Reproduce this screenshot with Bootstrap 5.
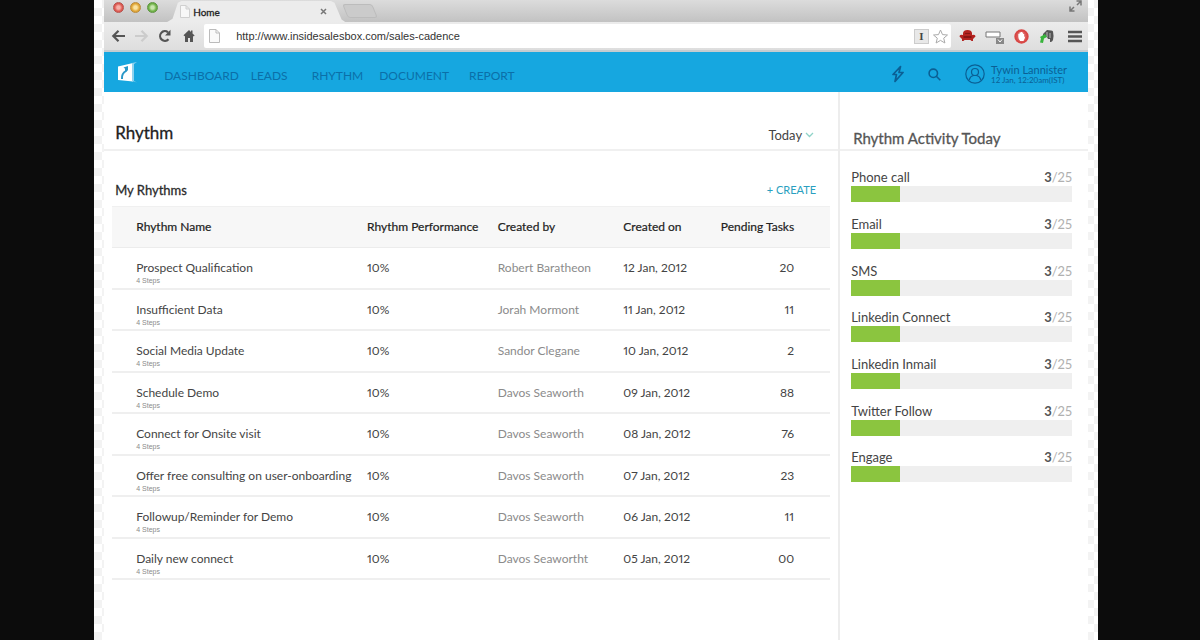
<!DOCTYPE html>
<html lang="en">
<head>
<meta charset="utf-8">
<meta name="viewport" content="width=device-width, initial-scale=1">
<title>Home</title>
<link rel="stylesheet" href="https://cdn.jsdelivr.net/npm/bootstrap@5.3.0/dist/css/bootstrap.min.css">
<style>
  :root { --ink: #444; --soft: #8b8b8b; --brand: #16a7e0; --brand-ink: #0b6fa8; --done: #8bc53f; }
  body { background: #0c0c0c; color: var(--ink); font: 12px/16px Lato, "Open Sans", sans-serif; font-variant-numeric: proportional-nums; }
  button { color: inherit; }
  svg { display: block; flex: none; }
  .stage { margin: 0 8.5% 0 7.85%; padding: 0 10px; min-height: 100vh;
    background: repeating-conic-gradient(#f3f3f3 0 25%, #fff 0 50%) 0 0 / 16px 16px; }
  .tabstrip { height: 22px; background: linear-gradient(#dcdcdc, #c2c2c2); padding: 0 6px 0 9px; }
  .lights { gap: 6px; width: 54px; padding-top: 2px; }
  .light { width: 11px; height: 11px; border-radius: 50%; border: 1px solid; }
  .light-close { background: radial-gradient(#f6b0a8 25%, #dd5850 60%); border-color: #b5524d; }
  .light-min { background: radial-gradient(#fbe3a0 25%, #e0a535 60%); border-color: #b98a3c; }
  .light-max { background: radial-gradient(#c8e6ad 25%, #6db045 60%); border-color: #5e9442; }
  .page-tab { width: 178px; height: 21px; padding: 0 18px 0 13px; gap: 3px; color: #222; font-size: 10px; -webkit-text-stroke: .3px;
    background: #ececec; clip-path: polygon(0 100%, 3% 85%, 6% 8%, 8% 0, 92% 0, 94% 8%, 98% 88%, 100% 100%); }
  .ghost-tab { width: 30px; height: 14px; background: #cbcbcb; border: 1px solid #bcbcbc; border-radius: 3px; transform: skewX(22deg); margin-bottom: 4px; }
  .toolbar { height: 30px; background: linear-gradient(#ececec, #dedede); border-bottom: 2px solid #c5ccd0; padding: 0 6px 0 7px; }
  .tool { padding: 0; border: 0; background: none; }
  .omnibox { height: 24px; background: #fff; border-radius: 2px; padding: 0 3px 0 5px; margin: 0 8px; min-width: 0; }
  .omnibox input { border: 0; outline: 0; padding: 0; min-width: 0; background: none; color: #333; font: 11px/16px "Liberation Sans", Arial, sans-serif; }
  .reader { width: 15px; height: 15px; background: #e8e8e8; border: 1px solid #ccc; font: bold 11px/13px "Liberation Serif", serif; }
  .extensions { gap: 9px; }
  .appbar { height: 40px; background: var(--brand); color: var(--brand-ink); padding: 0 21px 0 13px; }
  .appbar a { color: inherit; text-decoration: none; line-height: 16px; padding-top: 7px; }
  .appmenu { margin-left: 25px; column-gap: 12px; font-size: 12px; }
  .next-group { margin-left: 12px; }
  .account { font-size: 11px; line-height: 12px; gap: 6px; color: #0b5f94; }
  .account small { font-size: 8px; line-height: 9px; }
  .sheet { background: #fff; min-height: calc(100vh - 92px); }
  .side { flex: 0 0 25.4%; border-left: 2px solid #ededed; }
  .pagehead { height: 59px; border-bottom: 2px solid #f0f0f0; }
  .main-head { padding: 0 24px 6px 11px; }
  .side-head { padding: 0 0 1px 13px; }
  .main-title { font-size: 17px; line-height: 20px; font-weight: 400; color: #222; -webkit-text-stroke: .3px; }
  .side-title { font-size: 15px; line-height: 20px; font-weight: 400; color: #555; -webkit-text-stroke: .3px; }
  .period { font-size: 13px; gap: 3px; }
  .listhead { padding: 31px 22px 8px 11px; }
  .listhead h2 { font-size: 13px; line-height: 16px; color: #2b2b2b; -webkit-text-stroke: .3px; }
  .create { color: #2a9fc0; font-size: 11px; text-decoration: none; }
  .rhythms { margin: 0 8px; width: calc(100% - 16px); table-layout: fixed; border-collapse: separate; border-spacing: 0; }
  .rhythms th { height: 42px; background: #f7f7f7; border-top: 1px solid #f0f0f0; border-bottom: 1px solid #ececec; font-weight: 400; color: #222; -webkit-text-stroke: .2px; white-space: nowrap; padding: 0; }
  .rhythms td { height: 42px; vertical-align: top; padding: 12px 0 0; border-bottom: 2px solid #efefef; line-height: 16px; }
  .rhythms tr:nth-child(even) td { height: 41px; }
  .rhythms tr > :first-child { padding-left: 24px; }
  .rhythms tr > :last-child { text-align: right; padding-right: 36px; }
  .rhythms .steps { display: block; color: var(--soft); font: 7px/10px "Liberation Sans", Arial, sans-serif; }
  .c-name { width: 35.5%; } .c-perf { width: 18.2%; } .c-by { width: 17.5%; } .c-on { width: 12%; }
  .rhythms .by { color: var(--soft); }
  .meters { padding: 18px 16px 0 11px; }
  .meters li { height: 47px; font-size: 13px; }
  .meters li:nth-child(3n) { height: 46px; }
  .meters b { color: #555; font-weight: 700; }
  .count { color: #b0b0b0; }
  .meters .progress { height: 16px; margin-top: 1px; border-radius: 0; background: #efefef; }
  .meters .progress-bar { background: var(--done); }
</style>
<script src="https://cdn.jsdelivr.net/npm/bootstrap@5.3.0/dist/js/bootstrap.bundle.min.js"></script>
</head>
<body>
<div class="stage">
  <header>
    <div class="tabstrip d-flex align-items-end">
      <div class="lights d-flex align-self-start">
        <span class="light light-close"></span>
        <span class="light light-min"></span>
        <span class="light light-max"></span>
      </div>
      <div class="page-tab d-flex align-items-center">
        <svg width="10" height="13" viewBox="0 0 10 13" fill="#f8f8f8" stroke="#d0d0d0"><path d="M.5.5h5.500l3.500 3.500v8.500h-9zM6 .5v3.500h3.500"/></svg>
        <span>Home</span>
        <button class="tool ms-auto" aria-label="Close tab"><svg width="7" height="7" viewBox="0 0 7 7" stroke="#777" stroke-width="1.500"><path d="M1 1l5 5M6 1L1 6"/></svg></button>
      </div>
      <span class="ghost-tab"></span>
      <button class="tool ms-auto align-self-start" aria-label="Full screen"><svg width="13" height="12" viewBox="0 0 13 12" fill="none" stroke="#777" stroke-width="1.500"><path d="M7.500 1H12v4.500M12 1L8 5M1 6.500V11h4.500M1 11l4-4"/></svg></button>
    </div>
    <div class="toolbar d-flex align-items-center">
      <div class="d-flex align-items-center">
        <button class="tool" aria-label="Back"><svg width="15" height="14" viewBox="0 0 15 14" fill="none" stroke="#555" stroke-width="2.200"><path d="M14 7H2.500M7.500 1.800L2.300 7l5.200 5.200"/></svg></button>
        <button class="tool ms-2" aria-label="Forward"><svg width="15" height="14" viewBox="0 0 15 14" fill="none" stroke="#ccc" stroke-width="2.200"><path d="M1 7h11.500M7.500 1.800L12.700 7l-5.200 5.200"/></svg></button>
        <button class="tool ms-2" aria-label="Reload"><svg width="15" height="14" viewBox="0 0 15 14"><path d="M11.500 10.200A4.800 4.800 0 1 1 11 3.300" fill="none" stroke="#555" stroke-width="2.200"/><path d="M13.500.8v5.700H8z" fill="#555"/></svg></button>
        <button class="tool ms-2" aria-label="Home page"><svg width="16" height="14" viewBox="0 0 16 14" fill="#555"><path d="M9 1L3.500 6.200l1 1L5 6.800V13h3V9h2v4h3V6.800l.7.700.9-1L12.500 4.500V1.500H11v1.400z"/></svg></button>
      </div>
      <div class="omnibox d-flex align-items-center flex-grow-1">
        <svg width="11" height="14" viewBox="0 0 11 14" fill="#fafafa" stroke="#bbb"><path d="M.5.5H7l3.500 3.500v9.500H.5zM7 .5V4h3.500"/></svg>
        <input class="flex-grow-1 ms-3" type="text" aria-label="Address" value="http://www.insidesalesbox.com/sales-cadence">
        <button class="tool reader" aria-label="Cursor mode">I</button>
        <button class="tool ms-1" aria-label="Bookmark"><svg width="15" height="15" viewBox="0 0 15 15" fill="#fff" stroke="#aaa"><path d="M7.500 1l2 4.600 5 .4-3.800 3.200 1.200 4.800-4.400-2.600L3.100 14l1.200-4.800L.5 6l5-.4z"/></svg></button>
      </div>
      <div class="extensions d-flex align-items-center">
        <button class="tool" aria-label="Armchair"><svg width="17" height="14" viewBox="0 0 17 14" fill="#b3221f"><path d="M4 4q.5-3 4.500-3T13 4v2q3.500-1 3.500 1.500L14 10v2h-1.500L11.500 11h-6l-1 1H3v-2L.5 7.500Q.5 5 4 6z"/><path d="M4.500 8h8" stroke="#77100f" stroke-width="1.500"/><path d="M6 4.500h5" stroke="#851512"/></svg></button>
        <button class="tool" aria-label="Window"><svg width="20" height="17" viewBox="0 0 20 17"><path d="M1 4h14v5H1z" fill="#fff" stroke="#777"/><path d="M11 10h8v6h-8z" fill="#888"/><path d="M13 11.500l2 2.500 2-2.500" stroke="#fff" fill="none"/></svg></button>
        <button class="tool" aria-label="Block ads"><svg width="15" height="15" viewBox="0 0 15 15"><circle cx="7.500" cy="7.500" r="6.200" fill="#dc5b59" stroke="#d84745" stroke-width="2"/><path d="M4.300 8V4.800h1.200V3.500h1.200V3H8v.5h1.200V5h1v3l1-.8-.5 2.300L9.500 12H6.200Q4.300 10 4.300 8z" fill="#fff"/></svg></button>
        <button class="tool" aria-label="Evernote"><svg width="17" height="15" viewBox="0 0 17 15"><path d="M5 5l4-4q5 0 6 1.500 1 4 0 8.500-1 2.500-3 2V10h-2L9 8l-4-.5z" fill="#555"/><path d="M9 3v5M12 4v5" stroke="#bbb"/><path d="M2 8l5-3 2 3-3 1.500L5 14l-3-.5 1-4z" fill="#38b43c"/></svg></button>
        <button class="tool ms-1" aria-label="Menu"><svg width="14" height="13" viewBox="0 0 14 13" stroke="#555" stroke-width="2.400"><path d="M0 2h14M0 6.500h14M0 11h14"/></svg></button>
      </div>
    </div>
    <nav class="appbar d-flex align-items-center">
      <svg width="22" height="24" viewBox="0 0 22 24"><path d="M1 6.500L16 3v18.500L1 20z" fill="#fff"/><path d="M15 3l5-1-3 2v17l3 1.500-5-1.500z" fill="#8fd3ef"/><path d="M5 19q-.5-5.500 4-8V8" fill="none" stroke="#2a98c8" stroke-width="2"/><path d="M6.500 7.500L11 6v5z" fill="#2a98c8"/></svg>
      <div class="appmenu d-flex">
        <a href="#">DASHBOARD</a><a href="#">LEADS</a><a href="#" class="next-group">RHYTHM</a><a href="#" class="ms-1">DOCUMENT</a><a href="#" class="ms-2">REPORT</a>
      </div>
      <div class="d-flex align-items-center ms-auto mt-1">
        <button class="tool" aria-label="Quick actions"><svg width="12" height="18" viewBox="0 0 12 18" fill="none" stroke="#0b5f94" stroke-width="1.700" stroke-linejoin="round"><path d="M8.500 1.500L1 9.500h3.500L3 16.500l8-9H7z"/></svg></button>
        <button class="tool ms-4 me-4" aria-label="Search"><svg width="13" height="13" viewBox="0 0 13 13" fill="none" stroke="#0b5f94" stroke-width="1.600"><circle cx="5.300" cy="5.300" r="4.200"/><path d="M8.300 8.300l4 4"/></svg></button>
        <button class="tool account d-flex align-items-center text-start">
          <svg width="20" height="20" viewBox="0 0 20 20" fill="none" stroke="#0b5f94" stroke-width="1.200"><circle cx="10" cy="10" r="9.200"/><circle cx="10" cy="8" r="3.500"/><path d="M4.500 16v-1q1-3 4-3.500h3q3 .5 4 3.500v1"/></svg>
          <span>Tywin Lannister<small class="d-block">12 Jan, 12:20am(IST)</small></span>
        </button>
      </div>
    </nav>
  </header>
  <div class="sheet d-flex">
    <main class="flex-grow-1">
      <div class="pagehead main-head d-flex justify-content-between align-items-end">
        <h1 class="main-title mb-0">Rhythm</h1>
        <button class="tool period d-flex align-items-center">Today <svg width="9" height="6" viewBox="0 0 9 6" fill="none" stroke="#8fd3c8" stroke-width="1.300"><path d="M1 1l3.500 3.500L8 1"/></svg></button>
      </div>
      <div class="listhead d-flex justify-content-between align-items-center">
        <h2 class="mb-0 fw-normal">My Rhythms</h2>
        <a class="create" href="#">+ CREATE</a>
      </div>
      <table class="rhythms">
        <colgroup><col class="c-name"><col class="c-perf"><col class="c-by"><col class="c-on"><col></colgroup>
        <thead><tr><th>Rhythm Name</th><th>Rhythm Performance</th><th>Created by</th><th>Created on</th><th>Pending Tasks</th></tr></thead>
        <tbody>
          <tr><td>Prospect Qualification<span class="steps">4 Steps</span></td><td>10%</td><td class="by">Robert Baratheon</td><td>12 Jan, 2012</td><td>20</td></tr>
          <tr><td>Insufficient Data<span class="steps">4 Steps</span></td><td>10%</td><td class="by">Jorah Mormont</td><td>11 Jan, 2012</td><td>11</td></tr>
          <tr><td>Social Media Update<span class="steps">4 Steps</span></td><td>10%</td><td class="by">Sandor Clegane</td><td>10 Jan, 2012</td><td>2</td></tr>
          <tr><td>Schedule Demo<span class="steps">4 Steps</span></td><td>10%</td><td class="by">Davos Seaworth</td><td>09 Jan, 2012</td><td>88</td></tr>
          <tr><td>Connect for Onsite visit<span class="steps">4 Steps</span></td><td>10%</td><td class="by">Davos Seaworth</td><td>08 Jan, 2012</td><td>76</td></tr>
          <tr><td>Offer free consulting on user-onboarding<span class="steps">4 Steps</span></td><td>10%</td><td class="by">Davos Seaworth</td><td>07 Jan, 2012</td><td>23</td></tr>
          <tr><td>Followup/Reminder for Demo<span class="steps">4 Steps</span></td><td>10%</td><td class="by">Davos Seaworth</td><td>06 Jan, 2012</td><td>11</td></tr>
          <tr><td>Daily new connect<span class="steps">4 Steps</span></td><td>10%</td><td class="by">Davos Seawortht</td><td>05 Jan, 2012</td><td>00</td></tr>
        </tbody>
      </table>
    </main>
    <aside class="side">
      <div class="pagehead side-head d-flex align-items-end"><h2 class="side-title mb-0">Rhythm Activity Today</h2></div>
      <ul class="meters list-unstyled mb-0">
        <li><div class="d-flex justify-content-between"><span>Phone call</span><span class="count"><b>3</b>/25</span></div><div class="progress"><div class="progress-bar" style="width:22%"></div></div></li>
        <li><div class="d-flex justify-content-between"><span>Email</span><span class="count"><b>3</b>/25</span></div><div class="progress"><div class="progress-bar" style="width:22%"></div></div></li>
        <li><div class="d-flex justify-content-between"><span>SMS</span><span class="count"><b>3</b>/25</span></div><div class="progress"><div class="progress-bar" style="width:22%"></div></div></li>
        <li><div class="d-flex justify-content-between"><span>Linkedin Connect</span><span class="count"><b>3</b>/25</span></div><div class="progress"><div class="progress-bar" style="width:22%"></div></div></li>
        <li><div class="d-flex justify-content-between"><span>Linkedin Inmail</span><span class="count"><b>3</b>/25</span></div><div class="progress"><div class="progress-bar" style="width:22%"></div></div></li>
        <li><div class="d-flex justify-content-between"><span>Twitter Follow</span><span class="count"><b>3</b>/25</span></div><div class="progress"><div class="progress-bar" style="width:22%"></div></div></li>
        <li><div class="d-flex justify-content-between"><span>Engage</span><span class="count"><b>3</b>/25</span></div><div class="progress"><div class="progress-bar" style="width:22%"></div></div></li>
      </ul>
    </aside>
  </div>
</div>
</body>
</html>
